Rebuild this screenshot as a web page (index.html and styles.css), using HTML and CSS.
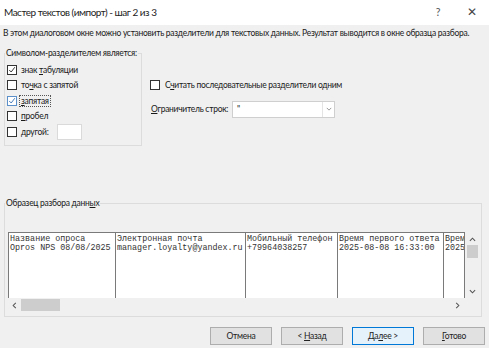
FILE: index.html
```html
<!DOCTYPE html>
<html lang="ru">
<head>
<meta charset="utf-8">
<link rel="stylesheet" href="styles.css">
</head>
<body>
<div class="dialog">
  <div class="titlebar">
    <span class="title">Мастер текстов (импорт) - шаг 2 из 3</span>
    <span class="tb-btns"><span class="help">?</span><span class="close">✕</span></span>
  </div>
  <div class="intro">В этом диалоговом окне можно установить разделители для текстовых данных. Результат выводится в окне образца разбора.</div>
  <div class="top">
    <fieldset class="group delims">
      <legend>Символом-разделителем является:</legend>
      <div class="row"><span class="cb on"><svg viewBox="0 0 10 10"><polyline points="1.5,5 4,7.5 8.5,1.5"/></svg></span><span>знак <u>т</u>абуляции</span></div>
      <div class="row"><span class="cb"></span><span>то<u>ч</u>ка с запятой</span></div>
      <div class="row"><span class="cb on focus"><svg viewBox="0 0 10 10"><polyline points="1.5,5 4,7.5 8.5,1.5"/></svg></span><span class="focused"><u>з</u>апятая</span></div>
      <div class="row"><span class="cb"></span><span><u>п</u>робел</span></div>
      <div class="row"><span class="cb"></span><span><u>д</u>ругой:</span><span class="other"></span></div>
    </fieldset>
    <div class="opts">
      <div class="row"><span class="cb"></span><span>С<u>ч</u>итать последовательные разделители одним</span></div>
      <div class="row qual"><span class="lbl"><u>О</u>граничитель строк:</span>
        <span class="select"><span class="val">"</span><span class="arrow"><svg viewBox="0 0 8 5"><polyline points="1,1 4,4 7,1"/></svg></span></span>
      </div>
    </div>
  </div>
  <fieldset class="group sample">
    <legend>Образец разбора данн<u>ы</u>х</legend>
    <div class="preview">
      <div class="grid">
        <div class="col c1"><div>Название опроса</div><div>Opros NPS 08/08/2025</div></div>
        <div class="col c2"><div>Электронная почта</div><div>manager.loyalty@yandex.ru</div></div>
        <div class="col c3"><div>Мобильный телефон</div><div>+79964038257</div></div>
        <div class="col c4"><div>Время первого ответа</div><div>2025-08-08 16:33:00</div></div>
        <div class="col c5"><div>Врем</div><div>2025</div></div>
      </div>
      <div class="vscroll">
        <svg class="up" viewBox="0 0 8 5"><polyline points="1,4 4,1 7,4"/></svg>
        <span class="vthumb"></span>
        <svg class="down" viewBox="0 0 8 5"><polyline points="1,1 4,4 7,1"/></svg>
      </div>
      <div class="hscroll">
        <svg class="left" viewBox="0 0 5 8"><polyline points="4,1 1,4 4,7"/></svg>
        <span class="hthumb"></span>
        <svg class="right" viewBox="0 0 5 8"><polyline points="1,1 4,4 1,7"/></svg>
      </div>
      <div class="corner"></div>
    </div>
  </fieldset>
  <div class="buttons">
    <span class="btn">Отмена</span>
    <span class="btn">&lt; <u>Н</u>азад</span>
    <span class="btn default">Да<u>л</u>ее &gt;</span>
    <span class="btn"><u>Г</u>отово</span>
  </div>
</div>
</body>
</html>
```
FILE: styles.css
```css
* { box-sizing: border-box; }
html, body { margin: 0; padding: 0; }
body {
  width: 489px; height: 348px; overflow: hidden;
  background: #f0f0f0;
  font-family: "Lato", "Noto Sans", sans-serif;
  font-size: 8.5px; letter-spacing: -0.28px; color: #1a1a1a;
}
u { text-decoration: underline; text-underline-offset: 1px; }
.dialog { width: 489px; height: 348px; display: flex; flex-direction: column; }
.titlebar {
  height: 25px; flex: none; background: #fff; display: flex; align-items: center;
  justify-content: space-between; padding: 0 0 2px 4px;
}
.title { font-size: 10px; letter-spacing: -0.5px; color: #222; }
.tb-btns { display: flex; align-items: center; letter-spacing: 0; }
.help { font-size: 10.5px; color: #555; width: 34px; text-align: center; }
.close { font-size: 12px; color: #444; width: 34px; text-align: center; }
.intro { padding: 2px 0 0 3px; line-height: 12px; white-space: nowrap; }
.top { display: flex; margin-top: 8px; }
.group {
  margin: 0; border: 1px solid #dcdcdc; min-width: 0;
}
.group legend { padding: 0 1px; margin-left: -2px; line-height: 12px; white-space: nowrap; }
.delims { width: 138px; height: 99px; margin-left: 4px; padding: 3px 0 0 2px; flex: none; }
.row { display: flex; align-items: center; height: 15.5px; gap: 4px; white-space: nowrap; }
.cb {
  width: 10px; height: 10px; border: 1px solid #333; background: #fff;
  display: inline-flex; flex: none;
}
.cb svg { width: 8px; height: 8px; fill: none; stroke: #222; stroke-width: 1.1; }
.cb.focus { border-color: #5b8fc9; }
.cb.focus svg { stroke: #3370b5; }
.focused { outline: 1px dotted #555; outline-offset: 0; padding: 0 1px; margin-left: -1px; }
.other { width: 25px; height: 16px; background: #fff; border: 1px solid #dadada; margin-left: 5px; }
.opts { margin-left: 8px; padding-top: 30px; }
.opts .row { gap: 5px; }
.qual { margin-top: 8px; height: 17px; gap: 0 !important; }
.qual .lbl { width: 81px; margin-left: 1px; }
.select {
  width: 103px; height: 17px; background: #fff; border: 1px solid #cfcfcf;
  display: flex; align-items: center;
}
.select .val { flex: 1; padding-left: 4px; }
.select .arrow { width: 12px; height: 15px; border-left: 1px solid #e4e4e4; display: flex; align-items: center; justify-content: center; }
.select .arrow svg { width: 6px; height: 4px; fill: none; stroke: #777; stroke-width: 1; }
.sample { margin: 51px 7px 0 4px; height: 120px; padding: 23px 0 0 3px; flex: none; }
.sample legend { margin-left: -3px; }
.preview {
  display: grid; grid-template-columns: 457px 15px; grid-template-rows: 66px 14px;
}
.grid {
  background: #fff; display: flex; overflow: hidden; border-top: 1px solid #7a7a7a;
  font-family: "Liberation Mono", monospace; font-size: 8.4px; line-height: 9px; letter-spacing: 0; color: #333;
}
.col { border-left: 1px solid #7a7a7a; padding: 2px 0 0 1px; white-space: nowrap; flex: none; overflow: hidden; }
.c1 { width: 107px; }
.c2 { width: 130px; }
.c3 { width: 92px; }
.c4 { width: 106px; }
.c5 { width: 22px; border-right: 1px solid #7a7a7a; }
.vscroll { background: #f0f0f0; display: flex; flex-direction: column; align-items: center; }
.vscroll svg, .hscroll svg { fill: none; stroke: #555; stroke-width: 1.2; }
.up { width: 7px; height: 5px; margin-top: 5px; }
.vthumb { width: 11px; height: 13px; background: #cdcdcd; margin-top: 3px; }
.down { width: 7px; height: 5px; margin-top: auto; margin-bottom: 4px; }
.hscroll { background: #f0f0f0; display: flex; align-items: center; padding: 0 0 0 4px; }
.left, .right { width: 5px; height: 7px; }
.hthumb { width: 39px; height: 12px; background: #cdcdcd; margin-left: 4px; }
.right { margin-left: auto; margin-right: 5px; }
.buttons { display: flex; justify-content: flex-end; gap: 9px; padding: 10px 4px 0 0; }
.btn {
  display: block; width: 62px; height: 18px; line-height: 16px; text-align: center;
  background: #e1e1e1; border: 1px solid #adadad; color: #222; white-space: pre;
}
.btn.default { border-color: #0078d7; background: #e5f1fb; }
```
